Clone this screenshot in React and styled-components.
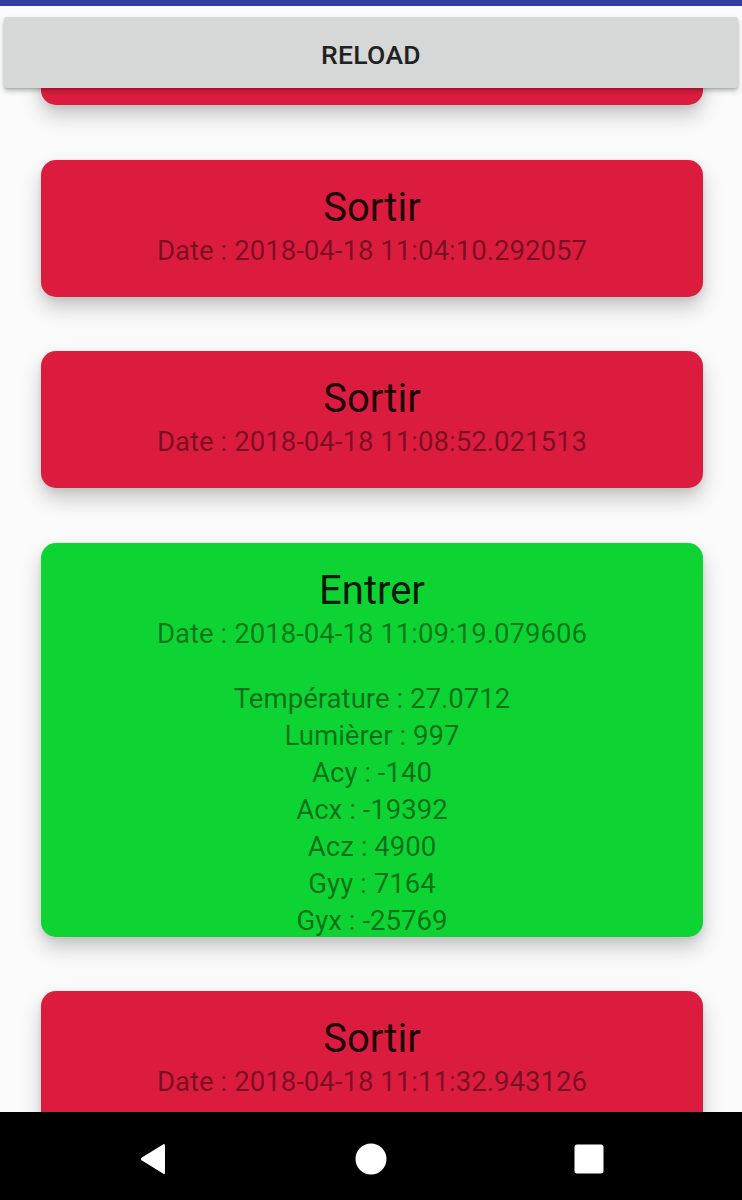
import React from 'react';
import styled, { createGlobalStyle } from 'styled-components';

const GlobalStyle = createGlobalStyle`
  html, body {
    margin: 0;
    padding: 0;
    background: #fafafa;
  }
  body {
    font-family: Roboto, "Noto Sans", "Liberation Sans", sans-serif;
    overflow: hidden;
  }
`;

const events = [
  { kind: 'out', peek: true },
  { kind: 'out', date: '2018-04-18 11:04:10.292057' },
  { kind: 'out', date: '2018-04-18 11:08:52.021513' },
  {
    kind: 'in',
    date: '2018-04-18 11:09:19.079606',
    sensors: [
      ['Température', '27.0712'],
      ['Lumièrer', '997'],
      ['Acy', '-140'],
      ['Acx', '-19392'],
      ['Acz', '4900'],
      ['Gyy', '7164'],
      ['Gyx', '-25769']
    ]
  },
  { kind: 'out', date: '2018-04-18 11:11:32.943126' }
];

export default function App() {
  return (
    <Screen>
      <GlobalStyle />
      <StatusStrip />
      <Content>
        <EventList>
          {events.map((ev, i) =>
            ev.peek ? (
              // card scrolled mostly under the reload button
              <Card key={i} $kind={ev.kind} $peek />
            ) : (
              <Card key={i} $kind={ev.kind} $expanded={!!ev.sensors}>
                <Title>{ev.kind === 'in' ? 'Entrer' : 'Sortir'}</Title>
                <DateLine>Date : {ev.date}</DateLine>
                {ev.sensors && (
                  <Details>
                    {ev.sensors.map(([label, value]) => (
                      <DetailLine key={label}>
                        {label} : {value}
                      </DetailLine>
                    ))}
                  </Details>
                )}
              </Card>
            )
          )}
        </EventList>

        <ReloadButton type="button">RELOAD</ReloadButton>
      </Content>

      <NavBar>
        <NavSlot>
          <svg width="28" height="32" viewBox="0 0 28 32">
            <path d="M26 2.5 L26 29.5 Q26 32 24 30.6 L2.5 17.3 Q0.8 16 2.5 14.7 L24 1.4 Q26 0 26 2.5 Z" fill="#fff" />
          </svg>
        </NavSlot>
        <NavSlot>
          <svg width="32" height="32" viewBox="0 0 32 32">
            <circle cx="16" cy="16" r="15.5" fill="#fff" />
          </svg>
        </NavSlot>
        <NavSlot>
          <svg width="30" height="30" viewBox="0 0 30 30">
            <rect x="0.5" y="0.5" width="29" height="29" rx="2.5" fill="#fff" />
          </svg>
        </NavSlot>
      </NavBar>
    </Screen>
  );
}

const Screen = styled.div`
  width: 742px;
  height: 1200px;
  display: flex;
  flex-direction: column;
  background: #fafafa;
  overflow: hidden;
`;

const StatusStrip = styled.div`
  height: 6px;
  flex: none;
  background: #303f9f;
`;

const Content = styled.div`
  position: relative;
  flex: 1;
  overflow: hidden;
`;

const EventList = styled.div`
  display: flex;
  flex-direction: column;
  gap: 54.5px;
  padding: 20px 39px 0 41px;
`;

const Card = styled.div`
  background: ${(p) => (p.$kind === 'in' ? '#0dd433' : '#dc1c3e')};
  border-radius: 15px;
  padding: 23px 16px ${(p) => (p.$expanded ? '0' : '28px')};
  height: ${(p) => (p.$peek ? '79px' : p.$expanded ? '394px' : 'auto')};
  box-sizing: border-box;
  overflow: hidden;
  text-align: center;
  box-shadow: 0 11px 20px rgba(0, 0, 0, 0.2), 0 3px 6px rgba(0, 0, 0, 0.07);
`;

const Title = styled.div`
  font-size: 40px;
  line-height: 50px;
  color: rgba(0, 0, 0, 0.88);
`;

const DateLine = styled.div`
  font-size: 27.6px;
  line-height: 36px;
  color: rgba(0, 0, 0, 0.45);
`;

const Details = styled.div`
  margin-top: 28px;
  display: flex;
  flex-direction: column;
`;

const DetailLine = styled.div`
  font-size: 27.6px;
  line-height: 37px;
  color: rgba(0, 0, 0, 0.48);
`;

const ReloadButton = styled.button`
  position: absolute;
  top: 11px;
  left: 4px;
  right: 4px;
  height: 71px;
  padding: 4px 0 0;
  border: none;
  border-radius: 3px;
  background: #d6d7d7;
  color: #212121;
  font-family: Roboto, "Liberation Sans", sans-serif;
  font-weight: 500;
  font-size: 26.5px;
  letter-spacing: 0.3px;
  box-shadow: 0 3px 5px rgba(0, 0, 0, 0.25), 0 1px 2px rgba(0, 0, 0, 0.12);
  cursor: pointer;
`;

const NavBar = styled.div`
  height: 88px;
  flex: none;
  box-sizing: border-box;
  padding-top: 6px;
  background: #000;
  display: flex;
  justify-content: center;
  align-items: center;
`;

const NavSlot = styled.div`
  width: 218px;
  display: flex;
  justify-content: center;
  align-items: center;
`;
